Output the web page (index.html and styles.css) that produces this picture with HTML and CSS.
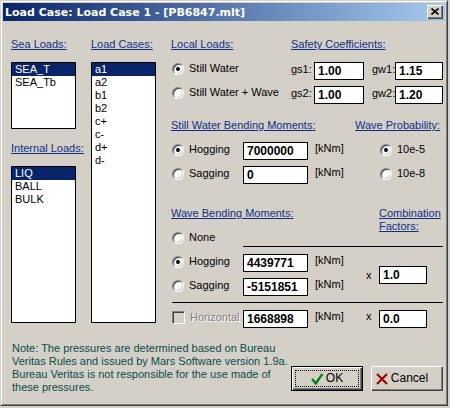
FILE: index.html
```html
<!DOCTYPE html>
<html>
<head>
<meta charset="utf-8">
<link rel="stylesheet" href="styles.css">
</head>
<body>
<div class="window">
  <div class="titlebar">
    <span class="title">Load Case: Load Case 1 - [PB6847.mlt]</span>
    <span class="closebtn"><svg width="8" height="7" viewBox="0 0 8 7"><path d="M0.5 0.5 L7.5 6.5 M7.5 0.5 L0.5 6.5" stroke="#000" stroke-width="1.6" fill="none"/></svg></span>
  </div>
  <div class="content">
    <div class="top">
      <div class="col col1">
        <div class="lbl">Sea Loads:</div>
        <div class="list list-sea">
          <div class="item sel">SEA_T</div>
          <div class="item">SEA_Tb</div>
        </div>
        <div class="lbl lbl-int">Internal Loads:</div>
        <div class="list list-int">
          <div class="item sel">LIQ</div>
          <div class="item">BALL</div>
          <div class="item">BULK</div>
        </div>
      </div>
      <div class="col col2">
        <div class="lbl">Load Cases:</div>
        <div class="list list-lc">
          <div class="item sel">a1</div>
          <div class="item">a2</div>
          <div class="item">b1</div>
          <div class="item">b2</div>
          <div class="item">c+</div>
          <div class="item">c-</div>
          <div class="item">d+</div>
          <div class="item">d-</div>
        </div>
      </div>
      <div class="col col3">
        <div class="row-lbl">
          <span class="lbl w120">Local Loads:</span>
          <span class="lbl">Safety Coefficients:</span>
        </div>
        <div class="row rB">
          <div class="opt opt0 w120"><span class="radio on"></span>Still Water</div>
          <span class="plabel">gs1:</span><div class="tb w50">1.00</div>
          <span class="plabel ml8">gw1:</span><div class="tb w48">1.15</div>
        </div>
        <div class="row rC">
          <div class="opt opt0 w120"><span class="radio"></span>Still Water + Wave</div>
          <span class="plabel">gs2:</span><div class="tb w50">1.00</div>
          <span class="plabel ml8">gw2:</span><div class="tb w48">1.20</div>
        </div>
        <div class="row-lbl rD">
          <span class="lbl w184">Still Water Bending Moments:</span>
          <span class="lbl">Wave Probability:</span>
        </div>
        <div class="row rE">
          <div class="opt w72"><span class="radio on"></span>Hogging</div>
          <div class="tb w65">7000000</div>
          <span class="unit w64">[kNm]</span>
          <div class="opt"><span class="radio on"></span>10e-5</div>
        </div>
        <div class="row rF">
          <div class="opt w72"><span class="radio"></span>Sagging</div>
          <div class="tb w65">0</div>
          <span class="unit w64">[kNm]</span>
          <div class="opt"><span class="radio"></span>10e-8</div>
        </div>
        <div class="wbm-head">
          <div class="w208">
            <div class="lbl">Wave Bending Moments:</div>
            <div class="opt opt-none"><span class="radio"></span>None</div>
          </div>
          <div class="lbl">Combination <br>Factors:</div>
        </div>
        <div class="hline hline1"></div>
        <div class="wbm">
          <div class="w195">
            <div class="row">
              <div class="opt w72"><span class="radio on"></span>Hogging</div>
              <div class="tb w65">4439771</div>
              <span class="unit">[kNm]</span>
            </div>
            <div class="row rSag">
              <div class="opt w72"><span class="radio"></span>Sagging</div>
              <div class="tb w65">-5151851</div>
              <span class="unit">[kNm]</span>
            </div>
          </div>
          <span class="times">x</span>
          <div class="tb w48">1.0</div>
        </div>
        <div class="hline hline2"></div>
        <div class="row rH">
          <div class="opt w72 disabled"><span class="check"></span>Horizontal</div>
          <div class="tb w65">1668898</div>
          <span class="unit w51">[kNm]</span>
          <span class="times times-h">x</span>
          <div class="tb w48">0.0</div>
        </div>
      </div>
    </div>
    <div class="bottom">
      <div class="note">Note: The pressures are determined based on Bureau<br>Veritas Rules and issued by Mars Software version 1.9a.<br>Bureau Veritas is not responsible for the use made of<br>these pressures.</div>
      <div class="buttons">
        <div class="btn btn-default"><div class="focus"><svg class="ico" width="12" height="12" viewBox="0 0 12 12"><path d="M1 6 L4.8 10.5 L11.5 0.8" stroke="#008000" stroke-width="2.3" fill="none"/></svg><span>OK</span></div></div>
        <div class="btn"><div class="inner"><svg class="ico" width="12" height="12" viewBox="0 0 12 12"><path d="M1 1 L11 11 M11 1 L1 11" stroke="#a00000" stroke-width="2.2" fill="none"/></svg><span>Cancel</span></div></div>
      </div>
    </div>
  </div>
</div>
</body>
</html>
```
FILE: styles.css
```css
* { box-sizing: border-box; }
html, body { margin: 0; padding: 0; background: #d4d0c8; }
body {
  font-family: "Liberation Sans", Arial, sans-serif;
  font-size: 11px;
  line-height: 13px;
  color: #000;
}
.window {
  width: 448px;
  height: 406px;
  background: #d4d0c8;
  border: 1px solid;
  border-color: #d4d0c8 #404040 #404040 #d4d0c8;
  box-shadow: inset 1px 1px 0 #fff, inset -1px -1px 0 #808080;
  padding: 2px;
}
.titlebar {
  height: 18px;
  background: linear-gradient(to right, #0a246a, #a6caf0);
  display: flex;
  align-items: center;
  justify-content: space-between;
  padding: 0 2px;
}
.title {
  color: #fff;
  font-family: "DejaVu Sans", Verdana, sans-serif;
  font-weight: bold;
  font-size: 11px;
  white-space: nowrap;
}
.closebtn {
  width: 16px;
  height: 14px;
  background: #d4d0c8;
  box-shadow: inset 1px 1px 0 #fff, inset -1px -1px 0 #404040, inset -2px -2px 0 #808080;
  display: flex;
  align-items: center;
  justify-content: center;
  padding-bottom: 1px;
}
.closebtn svg { display: block; }
.content {
  padding: 17px 0 0 8px;
}
.top {
  display: flex;
  gap: 15px;
  height: 290px;
}
.col { display: flex; flex-direction: column; }
.col1, .col2 { width: 65px; }
.col3 { width: 272px; }
.lbl {
  color: #0f2f86;
  text-decoration: underline;
  white-space: nowrap;
  line-height: 13px;
}
.list {
  background: #fff;
  border: 1px solid #000;
  margin-top: 11px;
}
.list-sea { height: 67px; }
.lbl-int { margin-top: 13px; }
.list-int { height: 157px; }
.list-lc { height: 261px; }
.item {
  height: 13px;
  line-height: 13px;
  padding-left: 3px;
  white-space: nowrap;
}
.item.sel { background: #0a246a; color: #fff; }

.row-lbl { display: flex; height: 13px; }
.row { display: flex; align-items: flex-start; height: 18px; }
.rB { margin-top: 11px; }
.rC { margin-top: 6px; }
.rD { margin-top: 15px; }
.rE { margin-top: 10px; }
.rF { margin-top: 6px; }
.rSag { margin-top: 6px; }
.w51 { width: 51px; flex: none; }
.w64 { width: 64px; flex: none; }
.w72 { width: 72px; flex: none; }
.w120 { width: 120px; flex: none; }
.w184 { width: 184px; flex: none; }
.w195 { width: 195px; flex: none; }
.w208 { width: 208px; flex: none; }
.w48 { width: 48px; flex: none; }
.w50 { width: 50px; flex: none; }
.w65 { width: 65px; flex: none; }
.ml8 { margin-left: 8px; }

.opt {
  display: flex;
  align-items: center;
  gap: 5px;
  height: 13px;
  margin-top: 1px;
  white-space: nowrap;
}
.opt0 { margin-top: 0; }
.radio {
  position: relative;
  flex: none;
  width: 12px;
  height: 12px;
  margin-left: 1px;
  border-radius: 50%;
  background: #fff;
  border: 1px solid;
  border-color: #808080 #fff #fff #808080;
  box-shadow: inset 1px 1px 0 #404040, inset -1px -1px 0 #d4d0c8;
}
.radio.on::after {
  content: "";
  position: absolute;
  left: 3px;
  top: 3px;
  width: 4px;
  height: 4px;
  border-radius: 50%;
  background: #000;
}
.check {
  flex: none;
  width: 13px;
  height: 13px;
  margin-left: 1px;
  background: #d4d0c8;
  border: 1px solid;
  border-color: #808080 #fff #fff #808080;
  box-shadow: inset 1px 1px 0 #404040, inset -1px -1px 0 #d4d0c8;
}
.disabled { color: #808080; text-shadow: 1px 1px 0 #fff; }
.plabel { width: 23px; flex: none; margin-top: 1px; white-space: nowrap; }
.tb {
  height: 18px;
  background: #fff;
  border: 1px solid #000;
  font-weight: bold;
  font-size: 12px;
  padding-left: 3px;
  display: flex;
  align-items: center;
  white-space: nowrap;
}
.unit { margin-left: 7px; white-space: nowrap; }
.wbm-head {
  display: flex;
  margin-top: 23px;
}
.opt-none { margin-top: 11px; }
.hline { height: 1px; background: #000; }
.hline1 { margin: 2px 0 0 72px; width: 200px; }
.hline2 { margin: 6px 0 0 1px; width: 271px; }
.wbm {
  display: flex;
  align-items: center;
  margin-top: 7px;
}
.times { width: 13px; flex: none; margin-top: 0; }
.times-h { margin-top: 0; }
.rH { margin-top: 7px; }
.rH .unit { margin-top: 0; }

.bottom {
  display: flex;
  align-items: flex-start;
  margin-top: 14px;
}
.note {
  flex: none;
  width: 279px;
  margin-left: 1px;
  color: #0a4a4a;
  white-space: nowrap;
  line-height: 13px;
}
.buttons {
  display: flex;
  gap: 8px;
  margin-top: 24px;
}
.btn {
  width: 72px;
  height: 25px;
  background: #d4d0c8;
  box-shadow: inset 1px 1px 0 #fff, inset -1px -1px 0 #404040, inset -2px -2px 0 #808080;
}
.btn-default {
  border: 1px solid #000;
  box-shadow: inset 1px 1px 0 #fff, inset -1px -1px 0 #404040, inset -2px -2px 0 #808080;
  padding: 3px;
}
.focus {
  height: 100%;
  border: 1px dotted #000;
  display: flex;
  align-items: center;
  justify-content: center;
  gap: 3px;
}
.inner {
  height: 100%;
  display: flex;
  align-items: center;
  justify-content: center;
  gap: 3px;
  padding-right: 10px;
}
.btn span { font-size: 12px; }
.ico { display: block; flex: none; }
```
